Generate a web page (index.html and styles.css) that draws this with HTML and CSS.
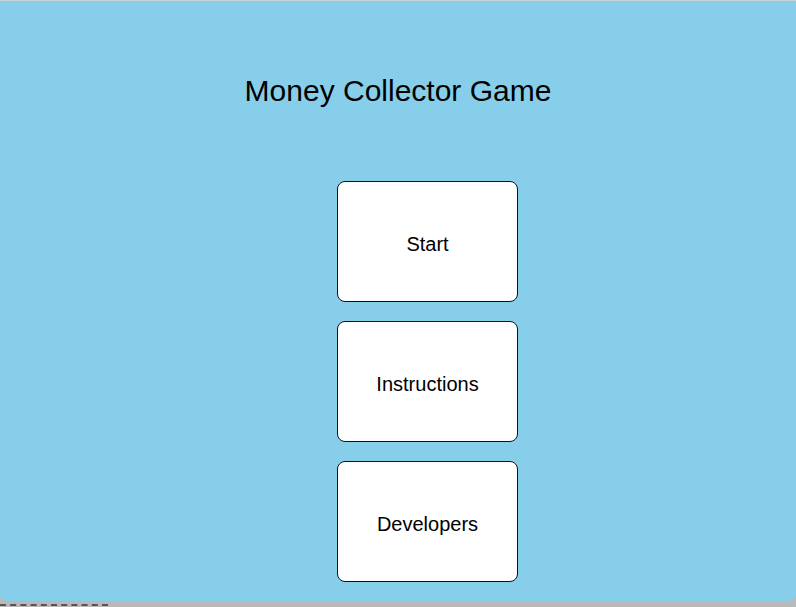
FILE: index.html
```html
<!DOCTYPE html>
<html lang="en">
<head>
  <meta charset="UTF-8">
  <title>Money Collector Game</title>
  <link rel="stylesheet" href="styles.css">
</head>
<body>
  <div class="game">
    <h1>Money Collector Game</h1>
    <div class="menu">
      <button>Start</button>
      <button>Instructions</button>
      <button>Developers</button>
    </div>
  </div>
  <div class="bar"><span class="dashes"></span></div>
</body>
</html>
```

FILE: styles.css
```css
html, body {
  margin: 0;
  padding: 0;
}
body {
  font-family: "Liberation Sans", Arial, sans-serif;
  background-color: #b9b9b9;
  width: 796px;
  height: 607px;
  overflow: hidden;
}
.game {
  box-sizing: border-box;
  height: 601px;
  background-color: #87ceea;
  border-top: 1px solid #c9d3d8;
  border-radius: 0 0 7px 7px;
  display: flex;
  flex-direction: column;
}
h1 {
  font-size: 30px;
  font-weight: normal;
  color: #000;
  text-align: center;
  margin: 74px 0 0;
  line-height: 32px;
}
.menu {
  margin: 74px 0 0 337px;
  display: flex;
  flex-direction: column;
  gap: 19px;
}
button {
  box-sizing: border-box;
  width: 181px;
  height: 121px;
  background: #fff;
  border: 1px solid #111;
  border-radius: 8px;
  font-family: "Liberation Sans", Arial, sans-serif;
  font-size: 20px;
  color: #000;
  padding: 5px 0 0;
  cursor: pointer;
}
.bar {
  height: 6px;
  position: relative;
}
.dashes {
  position: absolute;
  left: 0;
  top: 3px;
  width: 108px;
  height: 0;
  border-top: 2px dashed #555;
}
```
